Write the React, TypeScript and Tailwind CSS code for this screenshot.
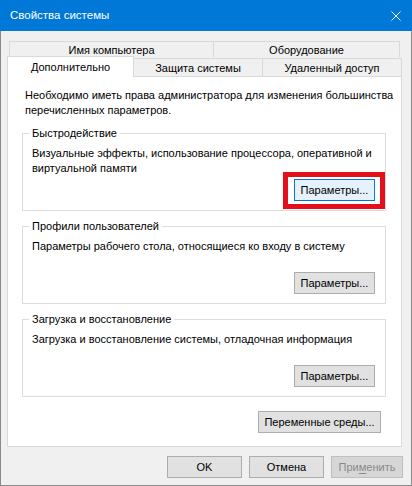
import React from 'react';

const font = "font-['Liberation_Sans',Arial,sans-serif]";

type BtnProps = { children: React.ReactNode; className?: string; focused?: boolean; disabled?: boolean };

const Btn: React.FC<BtnProps> = ({ children, className = '', focused, disabled }) => {
  const look = focused
    ? 'border-[#0078d7] bg-[#e5f1fb] text-black'
    : disabled
      ? 'border-[#bfbfbf] bg-[#d6d6d6] text-[#8a8a8a]'
      : 'border-[#adadad] bg-[#e1e1e1] text-black';
  return (
    <button type="button" className={`flex h-[22px] items-center justify-center border text-[11px] leading-none ${look} ${className}`}>
      {children}
    </button>
  );
};

type GroupProps = { title: string; lines: string[]; highlight?: boolean };

const Group: React.FC<GroupProps> = ({ title, lines, highlight }) => (
  <fieldset className="ml-[14px] mr-[15px] min-w-0 border border-[#dcdcdc] pl-[6px] pr-[10px] pb-[9px]">
    <legend className="px-[3px] text-[11px] leading-[15px]">{title}</legend>
    <div className="mt-[5px] h-[30px] whitespace-nowrap pl-[3px] text-[11px] leading-[15px]">
      {lines.map((l, i) => (
        <div key={i}>{l}</div>
      ))}
    </div>
    <div className="mt-[3px] flex justify-end">
      <div className="relative">
        <Btn className="w-[81px]" focused={highlight}>Параметры...</Btn>
        {highlight && (
          <div className="absolute -left-[11px] -right-[10px] -top-[7px] -bottom-[8px] border-[5px] border-[#e3101c]" />
        )}
      </div>
    </div>
  </fieldset>
);

export default function App() {
  return (
    <div className={`flex h-[486px] w-[412px] flex-col border-x border-b border-[#8a8a8a] bg-[#f0f0f0] text-black ${font}`}>
      {/* title bar */}
      <div className="-mx-px flex h-[31px] shrink-0 items-center justify-between bg-[#0078d7] pl-[10px] pr-[11px]">
        <span className="text-[11.5px] text-white">Свойства системы</span>
        <svg width="10" height="10" viewBox="0 0 10 10" className="block">
          <path d="M0.5 0.5 L9.5 9.5 M9.5 0.5 L0.5 9.5" stroke="#fff" strokeWidth="1" />
        </svg>
      </div>

      <div className="flex flex-1 flex-col pl-[6px] pr-[8px] pt-[10px]">
        {/* tabs, back row */}
        <div className="mx-[2px] flex h-[16px] text-[11px]">
          <div className="flex w-[204px] items-center justify-center border-l border-t border-[#d9d9d9] pt-px">Имя компьютера</div>
          <div className="flex w-[187px] items-center justify-center border-x border-t border-[#d9d9d9] pt-px">Оборудование</div>
        </div>
        {/* tabs, front row */}
        <div className="flex h-[19px] items-end text-[11px]">
          <div className="relative z-10 -mb-px flex h-[21px] w-[127px] items-center justify-center border-x border-t border-[#d9d9d9] bg-white">
            Дополнительно
          </div>
          <div className="flex h-[18px] w-[129px] items-center justify-center border-r border-t border-[#d9d9d9] pt-[2px]">Защита системы</div>
          <div className="flex h-[18px] w-[139px] items-center justify-center border-r border-t border-[#d9d9d9] pt-[2px]">Удаленный доступ</div>
        </div>

        {/* page */}
        <div className="flex h-[371px] w-[395px] flex-col border border-[#d9d9d9] bg-white pt-[11px]">
          <div className="whitespace-nowrap pl-[17px] text-[11px] leading-[15px]">
            <div>Необходимо иметь права администратора для изменения большинства</div>
            <div>перечисленных параметров.</div>
          </div>
          <div className="mt-[8px] flex flex-col gap-[8px]">
            <Group title="Быстродействие" lines={['Визуальные эффекты, использование процессора, оперативной и', 'виртуальной памяти']} highlight />
            <Group title="Профили пользователей" lines={['Параметры рабочего стола, относящиеся ко входу в систему']} />
            <Group title="Загрузка и восстановление" lines={['Загрузка и восстановление системы, отладочная информация']} />
          </div>
          <div className="mt-[14px] flex justify-end pr-[20px]">
            <Btn className="w-[123px]">Переменные среды...</Btn>
          </div>
        </div>

        {/* dialog buttons */}
        <div className="mt-[9px] flex justify-end gap-[7px]">
          <Btn className="h-[21px] w-[75px]">OK</Btn>
          <Btn className="h-[21px] w-[75px]">Отмена</Btn>
          <Btn className="h-[21px] w-[72px]" disabled>
            <span>
              При<span className="underline underline-offset-2">м</span>енить
            </span>
          </Btn>
        </div>
      </div>
    </div>
  );
}
